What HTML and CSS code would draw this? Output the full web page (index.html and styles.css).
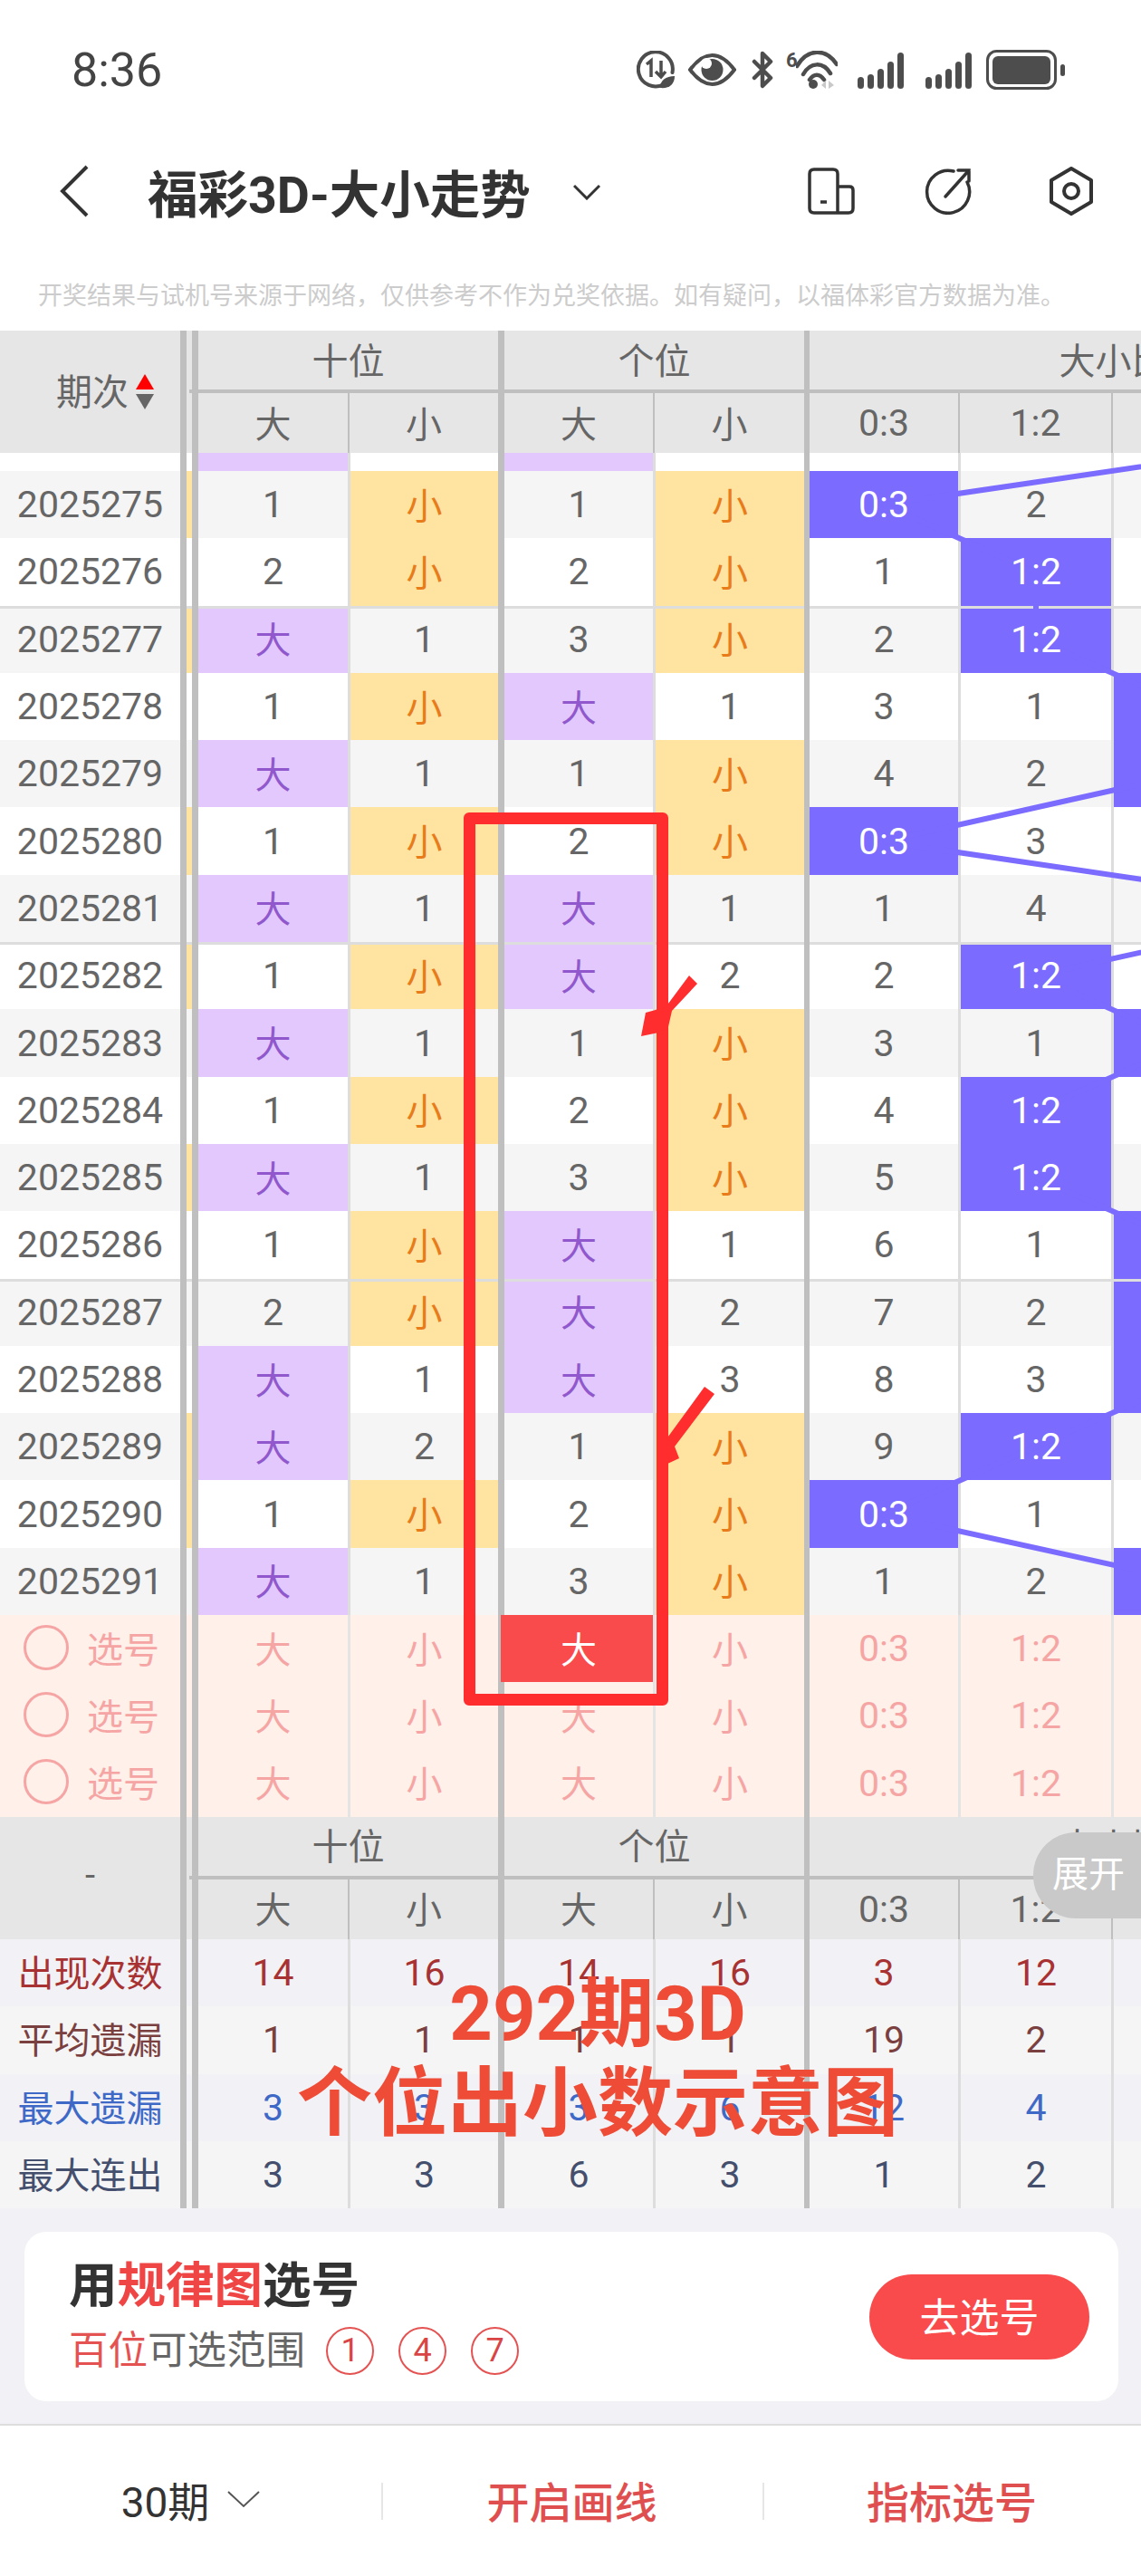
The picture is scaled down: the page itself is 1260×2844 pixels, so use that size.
FILE: index.html
```html
<!DOCTYPE html>
<html lang="zh-CN">
<head>
    <meta charset="UTF-8">
    <meta name="viewport" content="width=device-width, initial-scale=1.0">
    <title>福彩3D-大小走势</title>
    <link rel="stylesheet" href="styles.css">
</head>
<body>
<div class="page">
    <div class="status">
        <span class="time">8:36</span>
        <div class="status-icons">
            <svg class="ic-data" width="42" height="42" viewBox="0 0 42 42"><path d="M30 37 A19 19 0 1 1 39.500 24" fill="none" stroke="#4d4d4d" stroke-width="4" stroke-linecap="round"/><path d="M11 15 L16 11 V29 M27 11 V29 M21 23 L27 29 L32 23" fill="none" stroke="#4d4d4d" stroke-width="3.500"/><path d="M26 41 C26 33 32 28 42 28 C42 37 36 42 26 41Z" fill="#4d4d4d"/></svg>
            <svg class="ic-eye" width="53" height="36" viewBox="0 0 53 36"><path d="M2 18 C11 6 19 2 26.500 2 S42 6 51 18 C42 30 34 34 26.500 34 S11 30 2 18Z" fill="none" stroke="#4d4d4d" stroke-width="4"/><circle cx="26.500" cy="18" r="12" fill="#4d4d4d"/><circle cx="20" cy="11" r="6" fill="#fff"/></svg>
            <svg class="ic-bt" width="25" height="42" viewBox="0 0 25 42"><path d="M3 12 L21 30 L12 39 V3 L21 12 L3 30" fill="none" stroke="#4d4d4d" stroke-width="4.500" stroke-linejoin="round" stroke-linecap="round"/></svg>
            <div class="wifi">
                <span class="six">6</span>
                <svg width="46" height="42" viewBox="0 0 46 42"><path d="M1 17 C13 -3 33 -3 45 15 M8 26 C16 12 30 12 38 25 M15 32 C20 25 26 25 31 32" fill="none" stroke="#4d4d4d" stroke-width="4.500" stroke-linecap="round"/><circle cx="19" cy="37" r="5" fill="#4d4d4d"/><path d="M33 33 V42 L28 38Z M36 33 V42 L42 38Z" fill="#c9c9c9"/></svg>
            </div>
            <svg width="51" height="42" viewBox="0 0 51 42"><g fill="#4d4d4d"><rect x="0" y="29" width="7" height="13" rx="3.500"/><rect x="11" y="26" width="7" height="16" rx="3.500"/><rect x="22" y="20" width="7" height="22" rx="3.500"/><rect x="33" y="12" width="7" height="30" rx="3.500"/><rect x="44" y="2" width="7" height="40" rx="3.500"/></g></svg>
            <svg width="51" height="42" viewBox="0 0 51 42"><g fill="#4d4d4d"><rect x="0" y="29" width="7" height="13" rx="3.500"/><rect x="11" y="26" width="7" height="16" rx="3.500"/><rect x="22" y="20" width="7" height="22" rx="3.500"/><rect x="33" y="12" width="7" height="30" rx="3.500"/><rect x="44" y="2" width="7" height="40" rx="3.500"/></g></svg>
            <svg width="87" height="44" viewBox="0 0 87 44"><rect x="1.500" y="1.500" width="75" height="41" rx="10" fill="none" stroke="#4d4d4d" stroke-width="3"/><rect x="7" y="7" width="64" height="31" rx="6" fill="#4d4d4d"/><rect x="82" y="16" width="5" height="13" rx="2.500" fill="#4d4d4d"/></svg>
        </div>
    </div>

    <div class="nav">
        <svg class="back" width="32" height="58" viewBox="0 0 32 58"><path d="M30 2 L3 29 L30 56" fill="none" stroke="#333" stroke-width="4"/></svg>
        <h1>福彩3D-大小走势</h1>
        <svg class="caret" width="30" height="18" viewBox="0 0 30 18"><path d="M1 2 L15 16 L29 2" fill="none" stroke="#333" stroke-width="3"/></svg>
        <div class="nav-icons">
            <svg width="52" height="52" viewBox="0 0 52 52"><path d="M7 2 H28 Q33 2 33 7 V50 H7 Q2 50 2 45 V7 Q2 2 7 2Z M33 21 H46 Q50 21 50 25 V45 Q50 50 45 50 H33 M14 38 H21" fill="none" stroke="#333" stroke-width="3.500"/></svg>
            <svg width="54" height="52" viewBox="0 0 54 52"><path d="M33 4 A23.500 23.500 0 1 0 48 16" fill="none" stroke="#333" stroke-width="3.500" stroke-linecap="round"/><path d="M24 32 L50 3 M38 3 H50 V15" fill="none" stroke="#333" stroke-width="3.500" stroke-linecap="round"/></svg>
            <svg class="hex" width="50" height="54" viewBox="0 0 50 54"><path d="M25 2 L47 15 V39 L25 52 L3 39 V15Z" fill="none" stroke="#333" stroke-width="4" stroke-linejoin="round"/><circle cx="25" cy="27" r="8" fill="none" stroke="#333" stroke-width="4"/></svg>
        </div>
    </div>

    <p class="notice">开奖结果与试机号来源于网络，仅供参考不作为兑奖依据。如有疑问，以福体彩官方数据为准。</p>

    <div class="table">
        <div class="head">
            <div class="head-side">期次<svg class="sort" width="20" height="39" viewBox="0 0 20 39"><path d="M10 0 L20 17 H0Z" fill="#f00"/><path d="M0 22 H20 L10 39Z" fill="#666"/></svg></div>
            <i class="sep"></i>
            <div class="group wide2">十位</div>
            <div class="group wide2 thick">个位</div>
            <div class="group wide4 thicker">大小比</div>
            <div>大</div><div class="thin">小</div><div class="thick">大</div><div class="thin">小</div><div class="thicker num">0:3</div><div class="thin num">1:2</div><div class="thin"></div><div class="thin"></div>
        </div>

        <div class="rows">
            <div class="row stub"><span></span><i class="sep"></i><span class="big"></span><span></span><span class="big"></span><span></span><span></span><span></span><span></span></div>
            <div class="row alt"><span>2025275</span><i class="sep y"></i><span>1</span><span class="small">小</span><span>1</span><span class="small">小</span><span class="hit"><em>0:3</em></span><span>2</span><span></span></div>
            <div class="row"><span>2025276</span><i class="sep"></i><span>2</span><span class="small">小</span><span>2</span><span class="small">小</span><span>1</span><span class="hit"><em>1:2</em></span><span></span></div>
            <div class="row alt cut"><span>2025277</span><i class="sep y"></i><span class="big">大</span><span>1</span><span>3</span><span class="small">小</span><span>2</span><span class="hit"><em>1:2</em></span><span></span></div>
            <div class="row"><span>2025278</span><i class="sep"></i><span>1</span><span class="small">小</span><span class="big">大</span><span>1</span><span>3</span><span>1</span><span class="hit"></span></div>
            <div class="row alt"><span>2025279</span><i class="sep"></i><span class="big">大</span><span>1</span><span>1</span><span class="small">小</span><span>4</span><span>2</span><span class="hit"></span></div>
            <div class="row"><span>2025280</span><i class="sep y"></i><span>1</span><span class="small">小</span><span>2</span><span class="small">小</span><span class="hit"><em>0:3</em></span><span>3</span><span></span></div>
            <div class="row alt"><span>2025281</span><i class="sep"></i><span class="big">大</span><span>1</span><span class="big">大</span><span>1</span><span>1</span><span>4</span><span></span></div>
            <div class="row cut"><span>2025282</span><i class="sep y"></i><span>1</span><span class="small">小</span><span class="big">大</span><span>2</span><span>2</span><span class="hit"><em>1:2</em></span><span></span></div>
            <div class="row alt"><span>2025283</span><i class="sep"></i><span class="big">大</span><span>1</span><span>1</span><span class="small">小</span><span>3</span><span>1</span><span class="hit"></span></div>
            <div class="row"><span>2025284</span><i class="sep"></i><span>1</span><span class="small">小</span><span>2</span><span class="small">小</span><span>4</span><span class="hit"><em>1:2</em></span><span></span></div>
            <div class="row alt"><span>2025285</span><i class="sep y"></i><span class="big">大</span><span>1</span><span>3</span><span class="small">小</span><span>5</span><span class="hit"><em>1:2</em></span><span></span></div>
            <div class="row"><span>2025286</span><i class="sep"></i><span>1</span><span class="small">小</span><span class="big">大</span><span>1</span><span>6</span><span>1</span><span class="hit"></span></div>
            <div class="row alt cut"><span>2025287</span><i class="sep"></i><span>2</span><span class="small">小</span><span class="big">大</span><span>2</span><span>7</span><span>2</span><span class="hit"></span></div>
            <div class="row"><span>2025288</span><i class="sep"></i><span class="big">大</span><span>1</span><span class="big">大</span><span>3</span><span>8</span><span>3</span><span class="hit"></span></div>
            <div class="row alt"><span>2025289</span><i class="sep y"></i><span class="big">大</span><span>2</span><span>1</span><span class="small">小</span><span>9</span><span class="hit"><em>1:2</em></span><span></span></div>
            <div class="row"><span>2025290</span><i class="sep y"></i><span>1</span><span class="small">小</span><span>2</span><span class="small">小</span><span class="hit"><em>0:3</em></span><span>1</span><span></span></div>
            <div class="row alt"><span>2025291</span><i class="sep"></i><span class="big">大</span><span>1</span><span>3</span><span class="small">小</span><span>1</span><span>2</span><span class="hit"></span></div>
            <svg class="lines" width="1260" height="1283" viewBox="0 0 1260 1283"><polyline points="1480,-17 976,57 1144,132 1144,206 1312,280 1312,354 976,429 1480,503 1144,577 1312,652 1144,726 1144,800 1312,874 1312,949 1312,1023 1144,1097 976,1172 1312,1246" fill="none" stroke="#7b6bff" stroke-width="6"/></svg>
        </div>

        <div class="row sel"><span class="pickcell"><i class="ring"></i>选号</span><i class="sep"></i><span class="cjk">大</span><span class="cjk">小</span><span class="pick cjk">大</span><span class="cjk">小</span><span>0:3</span><span>1:2</span><span></span></div>
        <div class="row sel"><span class="pickcell"><i class="ring"></i>选号</span><i class="sep"></i><span class="cjk">大</span><span class="cjk">小</span><span class="cjk">大</span><span class="cjk">小</span><span>0:3</span><span>1:2</span><span></span></div>
        <div class="row sel"><span class="pickcell"><i class="ring"></i>选号</span><i class="sep"></i><span class="cjk">大</span><span class="cjk">小</span><span class="cjk">大</span><span class="cjk">小</span><span>0:3</span><span>1:2</span><span></span></div>

        <div class="foot">
            <div class="head">
                <div class="head-side center">-</div>
                <i class="sep"></i>
                <div class="group wide2">十位</div>
                <div class="group wide2 thick">个位</div>
                <div class="group wide4 thicker">大小比</div>
                <div>大</div><div class="thin">小</div><div class="thick">大</div><div class="thin">小</div><div class="thicker num">0:3</div><div class="thin num">1:2</div><div class="thin"></div><div class="thin"></div>
            </div>
            <div class="expand">展开</div>
        </div>

        <div class="row stat lilac count"><span class="label">出现次数</span><i class="sep"></i><span>14</span><span>16</span><span>14</span><span>16</span><span>3</span><span>12</span><span></span></div>
        <div class="row stat avg"><span class="label">平均遗漏</span><i class="sep"></i><span>1</span><span>1</span><span>1</span><span>1</span><span>19</span><span>2</span><span></span></div>
        <div class="row stat lilac max"><span class="label">最大遗漏</span><i class="sep"></i><span>3</span><span>3</span><span>3</span><span>6</span><span>12</span><span>4</span><span></span></div>
        <div class="row stat run"><span class="label">最大连出</span><i class="sep"></i><span>3</span><span>3</span><span>6</span><span>3</span><span>1</span><span>2</span><span></span></div>
    </div>

    <div class="card">
        <div class="card-text">
            <div class="card-title">用<span>规律图</span>选号</div>
            <div class="card-sub"><span>百位</span>可选范围<b>1</b><b>4</b><b>7</b></div>
        </div>
        <button class="go">去选号</button>
    </div>

    <div class="tabs">
        <div class="tab dark">30期<svg width="36" height="20" viewBox="0 0 36 20"><path d="M1 2 L18 18 L35 2" fill="none" stroke="#555" stroke-width="2"/></svg></div>
        <div class="tab">开启画线</div>
        <div class="tab">指标选号</div>
    </div>

    <!-- hand-drawn notes on top of the screenshot -->
    <div class="mark"></div>
    <svg class="arrows" width="1260" height="2844" viewBox="0 0 1260 2844"><path d="M761 1077 L770 1086 L742 1116 L737 1138 L708 1144 L713 1118 L735 1112Z M778 1531 L789 1539 L745 1597 L750 1610 L735 1617 L735 1590Z" fill="#ff2d2d"/></svg>
    <div class="note">292期3D<br>个位出小数示意图</div>
</div>
</body>
</html>
```

FILE: styles.css
```css
* { box-sizing: border-box; }
body { margin: 0; background: #f1f1f6; font-family: Roboto, "Noto Sans CJK SC", sans-serif; color: #666; }
.page { position: relative; width: 1260px; height: 2844px; overflow: hidden; }

/* top of the page */
.status { height: 154px; padding: 0 84px 0 79px; display: flex; align-items: center; justify-content: space-between; background: #fff; }
.time { font-size: 52px; color: #444; }
.status-icons { display: flex; align-items: center; }
.ic-data { margin-right: 15px; }
.ic-eye { margin-right: 17px; }
.ic-bt { margin-right: 13px; }
.wifi { display: flex; margin-right: 22px; }
.six { font-size: 22px; font-weight: 700; line-height: 22px; color: #4d4d4d; width: 11px; }
.status-icons > svg:nth-last-child(3) { margin-right: 24px; }
.status-icons > svg:nth-last-child(2) { margin-right: 16px; }

.nav { height: 114px; padding: 0 52px 0 66px; display: flex; align-items: center; background: #fff; }
.nav h1 { margin: 0 0 0 65px; font-size: 55.5px; font-weight: 700; color: #333; }
.caret { margin: 2px 0 0 47px; }
.nav-icons { margin-left: auto; display: flex; align-items: center; gap: 76px; }
.hex { margin-left: 8px; }

.notice { margin: 0; height: 97px; padding: 40px 0 0 42px; font-size: 27px; line-height: 38px; color: #ccc; background: #fff; }

/* trend table */
.table { width: 1260px; overflow: hidden; }
.head, .row { width: 1565px; display: grid; grid-template-columns: 199px 20px 165px 166px 171px 167px 170px 169px 169px 169px; }
.head { height: 135px; grid-template-rows: 69px 66px; background: #e6e6e6; font-size: 40px; }
.head > div { display: flex; align-items: center; justify-content: center; padding-bottom: 3px; }
.head > .num { padding-bottom: 0; font-size: 41px; }
.head .head-side { grid-row: span 2; justify-content: flex-start; padding: 0 0 5px 62px; }
.head .center { justify-content: center; padding-left: 0; }
.sort { margin: 5px 0 0 8px; }
.head .sep { grid-row: span 2; background: linear-gradient(#bfbfbf, #bfbfbf) no-repeat right 65px / 3px 4px; }
.head .group { border-bottom: 4px solid #bfbfbf; padding-bottom: 4px; }
.wide2 { grid-column: span 2; }
.wide4 { grid-column: span 4; }
.thin { border-left: 2px solid #bfbfbf; }
.thick { border-left: 7px solid #bfbfbf; }
.thicker { border-left: 6px solid #bfbfbf; }

.rows { position: relative; overflow: hidden; }
.row { height: 74.3px; background: #fff; font-size: 41px; }
.row.alt { background: #f5f5f5; }
.row.stub { height: 20px; }
.row > span { display: flex; align-items: center; justify-content: center; min-width: 0; }
.row > span:nth-child(4), .row > span:nth-child(6), .row > span:nth-child(8), .row > span:nth-child(9) { border-left: 3px solid #ddd; }
.row > span:nth-child(5) { border-left: 7px solid #bfbfbf; }
.row > span:nth-child(7) { border-left: 6px solid #bfbfbf; }
.sep { display: block; border-left: 7px solid #bfbfbf; border-right: 7px solid #bfbfbf; }
.sep.y { background: #ffe3a1; }
.row.cut > span, .row.cut > .sep { box-shadow: inset 0 3px #ddd; }

.big { background: #e2c8fd; color: #9058cc; font-size: 40px; padding-bottom: 3px; }
.small { background: #ffe3a1; color: #e87b1a; font-size: 40px; padding-bottom: 3px; }
.hit { background: #7b6bff; color: #fff; }
.hit em { position: relative; z-index: 2; font-style: normal; }
.lines { position: absolute; left: 0; top: 0; z-index: 1; }

.row.sel { background: #fff0e9; color: #f6a5a5; }
.row.sel > span:nth-child(n+3) { border-left-color: #e4e4e4; }
.row.sel > span:nth-child(5), .row.sel > span:nth-child(7) { border-left-color: #bfbfbf; }
.row.sel .cjk { font-size: 40px; padding-bottom: 3px; }
.row.sel .pick { border-left-width: 3px; padding-left: 4px; background: #f94b4b; color: #fff; }
.row.sel .pickcell { justify-content: flex-start; padding: 0 0 3px 26px; gap: 20px; font-size: 40px; }
.ring { width: 50px; height: 50px; border: 3px solid #f6a5a5; border-radius: 50%; }

.foot { position: relative; }
.expand { position: absolute; right: 0; top: 17px; width: 119px; height: 95px; padding-left: 21px; border-radius: 47px 0 0 47px; background: #c9c9c9; color: #fff; font-size: 40px; line-height: 93px; }

.row.stat { background: #f5f5f5; }
.row.lilac { background: #f1f1f6; }
.row.stat .label { font-size: 40px; padding-bottom: 4px; }
.count { color: #a83232; }
.avg { color: #7a3f3f; }
.max { color: #3f69c6; }
.run { color: #444f6e; }

/* bottom card and tabs */
.card { margin: 26px 25px 0 27px; height: 187px; padding: 0 32px 0 49px; display: flex; align-items: center; justify-content: space-between; background: #fff; border-radius: 24px; }
.card-title { font-size: 53.5px; line-height: 60px; font-weight: 700; color: #333; }
.card-title span { color: #f04545; }
.card-sub { margin-top: 15px; display: flex; align-items: center; font-size: 43.5px; line-height: 53px; color: #666; }
.card-sub span { color: #e55252; }
.card-sub b { width: 53px; height: 53px; margin-left: 27px; border: 2px solid #e55252; border-radius: 50%; display: flex; align-items: center; justify-content: center; font-size: 36px; font-weight: 400; color: #d94444; }
.card-sub b:first-of-type { margin-left: 23px; }
.go { width: 243px; height: 94px; padding: 0 0 3px; border: none; border-radius: 47px; background: #f94b4b; color: #fff; font-family: inherit; font-size: 44px; }

.tabs { position: absolute; left: 0; right: 0; bottom: 0; height: 168px; display: grid; grid-template-columns: 421px 421px 418px; border-top: 2px solid #ddd; background: #fff; }
.tab { display: flex; align-items: center; justify-content: center; gap: 20px; padding-bottom: 4px; font-size: 47px; font-weight: 500; color: #e04f4f; background: linear-gradient(#e6e6e6, #e6e6e6) no-repeat left center / 2px 41px; }
.tab.dark { font-size: 46px; font-weight: 400; color: #333; background: none; }

/* the red notes */
.mark { position: absolute; left: 512px; top: 897px; width: 226px; height: 986px; border: 13px solid #ff2d2d; border-radius: 6px; z-index: 3; }
.arrows { position: absolute; left: 0; top: 0; z-index: 3; }
.note { position: absolute; left: 300px; top: 2174px; width: 720px; text-align: center; font-size: 83px; line-height: 99px; font-weight: 700; color: #ee4c36; z-index: 3; }
```
